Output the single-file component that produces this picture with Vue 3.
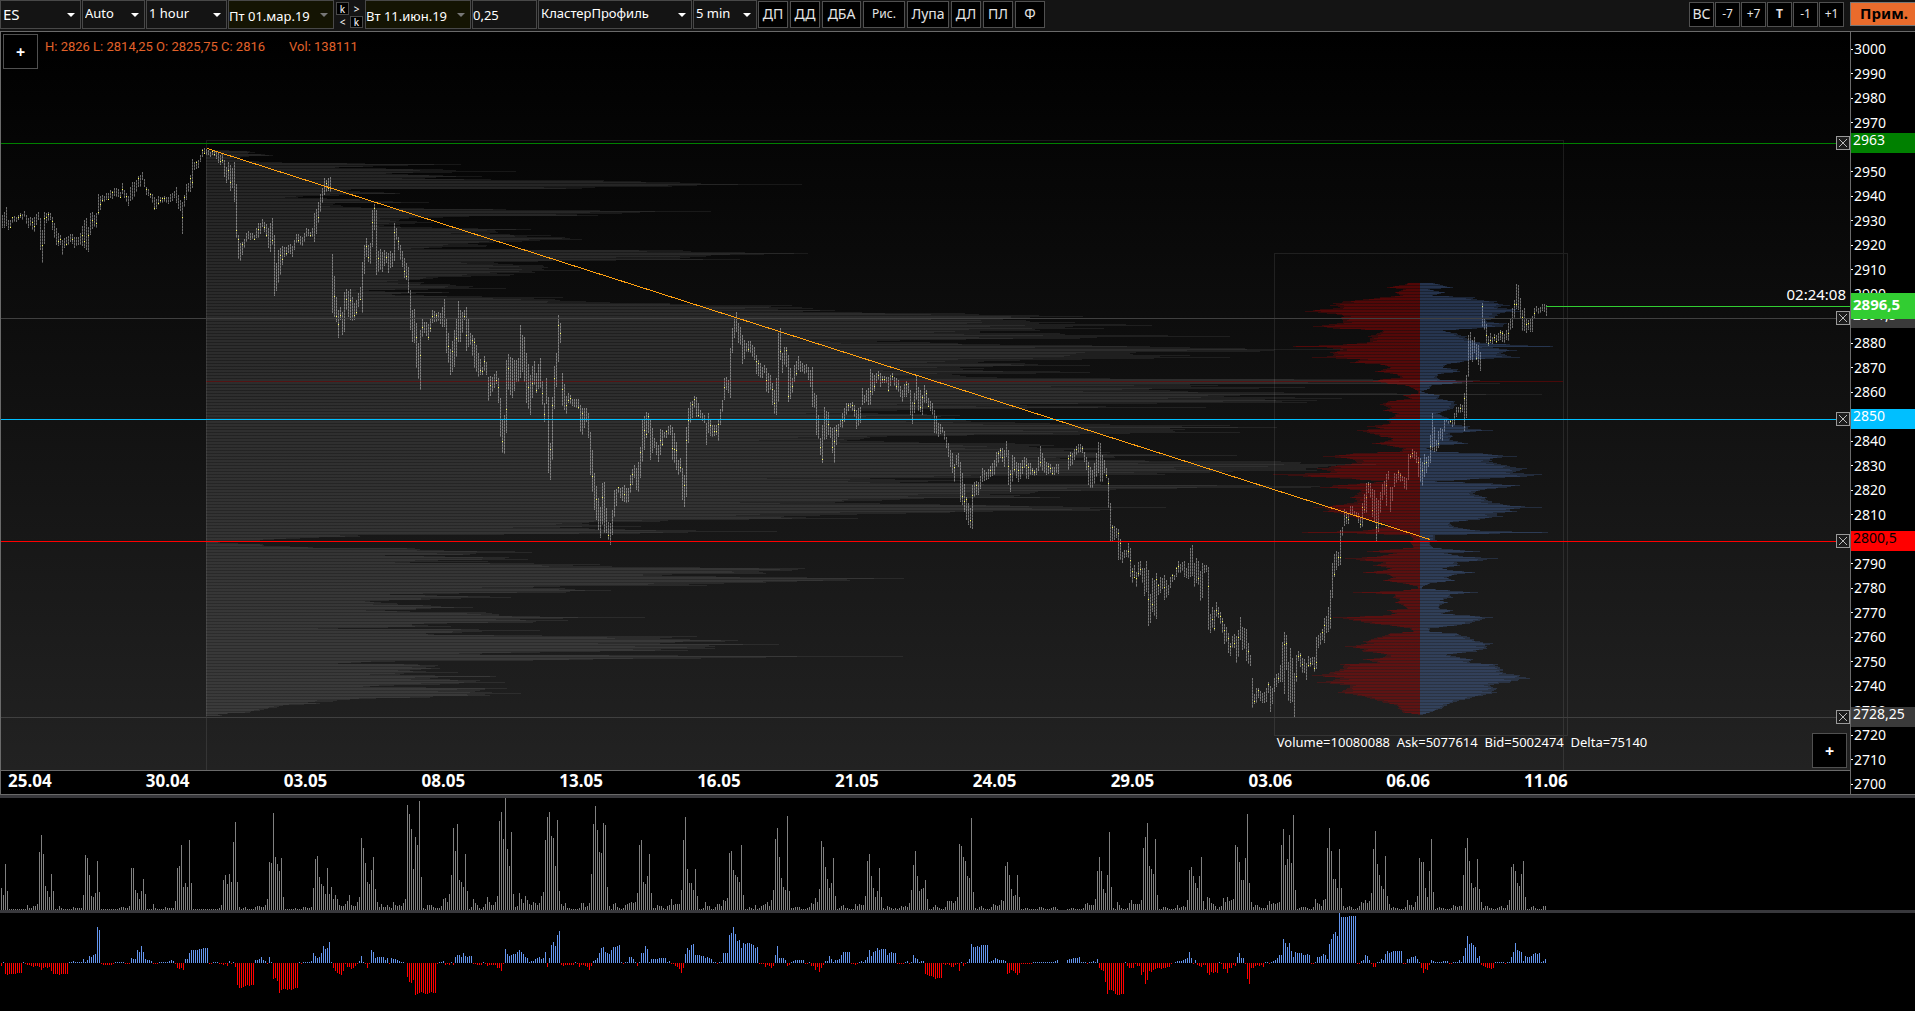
<script setup>
import { ref } from 'vue'

const symbol = ref('ES')
const scale = ref('Auto')
const period = ref('1 hour')
const dateFrom = ref('Пт 01.мар.19')
const dateTo = ref('Вт 11.июн.19')
const tick = ref('0,25')
const view = ref('КластерПрофиль')
const step = ref('5 min')

const tools = [
  { t: 'ДП', w: 30 }, { t: 'ДД', w: 30 }, { t: 'ДБА', w: 39 }, { t: 'Рис.', w: 42, small: true },
  { t: 'Лупа', w: 42 }, { t: 'ДЛ', w: 30 }, { t: 'ПЛ', w: 30 }, { t: 'Ф', w: 30 }
]
const shifts = [
  { t: 'ВС' }, { t: '-7', small: true }, { t: '+7', small: true },
  { t: 'Т', small: true, bold: true }, { t: '-1', small: true }, { t: '+1', small: true }
]

/* Round prices that sit wholly under a level tag get no scale label */
const covered = [2960, 2890, 2850, 2800]
const prices = Array.from({ length: 31 }, (_, i) => 3000 - i * 10)
const dates = ['25.04', '30.04', '03.05', '08.05', '13.05', '16.05', '21.05', '24.05', '29.05', '03.06', '06.06', '11.06']

const TOP = 32
const PLOT_H = 738
const AXIS_H = 762
const levels = [
  { y: 143, label: '2963', line: '#008000', bg: '#008000', fg: '#fff' },
  { y: 318, label: '2891,5', line: '#404040', bg: '#3a3a3a', fg: '#fff' },
  { y: 419, label: '2850', line: '#00bfff', bg: '#00bfff', fg: '#fff' },
  { y: 541, label: '2800,5', line: '#ff0000', bg: '#ff0000', fg: '#000' },
  { y: 717, label: '2728,25', line: '#404040', bg: '#3a3a3a', fg: '#fff' }
]
const inPlot = y => ((y - TOP) / PLOT_H) * 100 + '%'
const onAxis = y => ((y - TOP) / AXIS_H) * 100 + '%'

function noise(n) {
  const s = Math.sin(n * 127.1 + 11.7) * 43758.5453
  return s - Math.floor(s)
}
const parse = s => s.trim().split(/\s+/).map(p => p.split(',').map(Number))

/* Price bars: each block has its own origin and scale, points are x,high,low */
const priceBlocks = [
  { x: 0, y: 120, k: 2.45, pts: `5,285,325 15,262,318 20,300,330 30,290,308 45,286,300 60,272,292 70,295,325 75,290,318 84,290,335 94,277,300 99,295,390 104,330,430 109,277,372 115,280,310 124,278,300 129,290,330 135,325,375 145,345,375 150,360,405 157,355,385 172,342,365 182,352,385 192,350,375 197,340,375 207,300,385 212,295,390 217,320,395 222,280,345 232,285,320 237,280,325 241,222,285 250,225,245 265,218,240 285,205,230 295,215,235 300,190,222 305,210,235 315,228,258 324,185,240 334,180,215 345,165,200 350,157,180 359,200,225 369,220,235 379,232,270 390,232,250 405,232,250 415,222,245 427,212,235 432,200,250 437,225,268 442,240,272 447,245,343 452,225,262 457,192,240 462,190,215 466,165,215 471,117,205 476,125,150 486,120,145 491,105,125 496,88,110 501,84,102 510,90,105 525,92,108 535,100,128 545,100,130 550,120,170 555,140,190 560,125,180 565,135,212 570,145,205 574,125,245 579,192,355 584,345,418 589,370,422 599,358,385 604,338,365 614,338,360 624,345,360 634,308,355 643,298,320 653,312,350 658,325,385 662,310,395 667,295,375 672,345,527 677,430,512 682,390,490 687,385,465 697,380,410 707,375,400 717,378,412 727,343,370 740,350,378 751,325,350 760,335,350 766,325,352 771,280,365 780,245,310 790,205,250 795,175,225 800,180,215 809,172,215 814,402,580 819,468,590 824,530,605 829,570,655 834,560,600 839,575,645 844,515,635 849,508,570 858,508,600 868,550,600 878,520,560 883,500,540 888,425,580 893,375,462 898,355,410 903,375,425 908,370,432 913,270,380 918,253,330 923,270,465 928,392,455 937,395,455 947,395,430 952,400,458 962,400,440 967,310,422 972,325,360 977,350,390 987,392,440 992,415,475 997,428,480 1001,440,520 1006,510,630 1011,570,665 1015,568,670 1020,608,745 1025,670,777 1030,630,810 1035,597,650 1040,605,640 1049,612,660 1059,570,608 1069,578,605 1079,580,612 1089,537,620 1094,598,700 1103,688,765 1113,630,740 1118,595,710 1123,543,665 1128,570,665 1138,570,600 1143,560,692 1152,640,675 1162,655,745 1172,700,772 1182,740,765 1187,708,752 1192,725,765 1197,770,842 1206,770,815 1216,752,792 1221,775,850 1226,835,950 1231,900,1000 1236,885,1003 1241,720,940 1246,702,810 1255,715,835 1265,720,785 1270,715,785 1275,615,775 1280,645,755 1285,652,785 1290,700,850 1299,765,885 1309,722,795 1314,760,820 1324,715,805 1334,850,905 1339,775,852 1344,830,1058 1348,970,1080 1353,830,1020 1358,738,868 1363,700,800 1368,585,725 1373,610,670 1378,760,858 1388,828,882 1393,820,850 1403,838,858 1417,838,868 1422,855,935 1427,865,945 1437,865,905 1442,880,955 1447,935,1065 1452,990,1115 1457,1060,1170 1466,1135,1230 1471,1160,1255 1476,1088,1215 1481,1085,1240 1486,1165,1240 1491,1205,1260 1496,1210,1275 1500,1170,1245 1506,1110,1190 1515,1100,1120 1530,1095,1145 1540,1105,1145 1545,1065,1120 1555,1035,1075 1560,1045,1110 1565,1025,1115` },
  { x: 640, y: 160, k: 2.45, pts: `0,860,955 5,780,905 15,755,835 20,758,820 26,780,900 36,835,865 46,855,905 51,808,885 60,815,835 74,795,825 80,800,900 89,845,930 95,900,945 99,895,935 104,925,1020 109,945,1040 114,800,1010 119,745,850 124,725,790 134,708,745 138,710,770 148,750,775 158,765,790 163,790,855 168,760,820 178,795,830 188,795,825 193,780,842 202,720,755 207,655,720 212,650,690 217,660,700 221,565,715 226,505,580 231,475,535 236,457,515 241,490,550 246,500,555 251,525,612 261,550,575 271,543,580 281,560,600 286,585,642 300,620,655 305,615,640 310,625,695 320,645,690 325,670,735 330,690,762 334,655,765 339,520,725 344,505,600 349,580,640 354,560,615 359,562,620 364,585,725 374,655,700 379,615,665 389,588,630 398,610,635 408,612,640 418,630,680 422,620,740 427,700,745 432,705,825 437,765,838 442,835,885 447,795,908 452,740,840 462,755,825 467,800,835 472,805,880 477,800,910 482,795,855 491,780,800 496,760,805 506,730,765 516,730,745 526,735,770 531,750,808 540,740,790 545,685,735 550,705,730 559,685,735 564,628,735 570,640,705 580,640,670 584,633,660 589,640,680 594,648,670 604,650,670 609,650,695 619,638,660 629,655,690 643,690,725 653,662,710 658,670,700 663,690,765 667,725,792 672,700,760 677,648,720 682,680,752 692,705,765 697,675,730 707,715,740 717,730,765 722,750,820 731,790,830 741,800,820 751,830,865 756,850,890 766,880,940 771,912,965 776,885,915 780,878,920 785,905,1025 790,940,1035 800,1010,1080 810,1045,1105 814,975,1108 820,965,1010 830,965,1005 839,925,965 850,935,960 865,900,945 870,875,920 880,865,895 888,865,905 893,870,920 898,842,890 903,870,975 908,930,995 912,885,965 917,892,935 927,910,965 942,892,925 947,895,958 962,925,945 972,925,945 981,858,920 991,895,940 1005,912,940 1015,920,945 1025,912,942 1050,885,930 1060,880,915 1069,858,885 1084,858,880 1094,890,930 1099,905,975 1109,930,985 1118,880,950 1123,845,940 1128,850,965 1133,885,965 1138,900,940 1143,925,955 1148,955,1045 1152,1030,1142 1157,1095,1145 1167,1103,1135 1172,1108,1200 1182,1175,1208 1192,1170,1190 1197,1150,1195` },
  { x: 1110, y: 500, k: 3, pts: `61,143,232 67,205,250 73,195,235 79,215,262 85,187,232 91,183,225 97,205,248 103,205,287 109,182,275 115,210,377 121,282,370 127,235,335 133,240,347 139,220,358 145,252,285 152,230,280 158,235,268 164,225,300 170,240,295 176,255,285 182,232,265 194,225,240 200,202,232 206,182,218 212,193,220 218,185,212 224,183,230 230,205,235 236,190,238 241,145,230 247,135,228 253,190,260 259,175,250 265,183,255 271,213,302 277,190,293 283,195,218 289,195,215 295,200,390 301,343,398 307,322,385 313,330,393 319,305,350 325,322,355 331,337,373 337,355,398 343,372,433 349,380,425 355,400,460 361,430,468 367,408,445 373,402,445 379,408,490 385,390,470 391,350,420 397,380,450 403,383,447 409,388,482 415,430,493 421,465,497 427,535,625 433,582,612 439,565,610 445,563,595 451,573,602 463,575,608 469,565,605 475,547,580 481,557,635 487,563,612 493,535,575 499,523,560 505,518,550 511,495,545 517,425,545 523,395,583 529,405,510 535,487,602 541,445,608 547,475,605 553,520,653 559,465,547 565,453,483 571,460,500 577,475,518 583,477,520 589,490,540 595,468,500 607,470,495 613,470,515 619,412,508 625,405,445 631,400,435 637,387,420 643,355,430 649,348,398 655,320,395 661,270,388 667,190,295 673,163,230 679,153,210 685,155,197 691,90,195 697,82,107` },
  { x: 1240, y: 240, k: 3, pts: `313,808,858 321,820,853 327,805,835 331,798,825 337,797,822 343,812,825 350,817,830 355,820,850 361,830,865 367,790,860 373,762,820 379,728,818 385,727,760 391,728,775 397,748,830 403,750,850 409,773,902 415,780,875 421,757,820 427,733,780 433,722,765 439,703,798 445,692,720 451,742,815 457,740,782 463,700,740 469,703,730 475,690,720 481,700,725 487,708,722 493,710,748 499,715,750 505,643,720 511,643,658 517,628,655 523,633,658 529,635,670 535,650,710 541,655,725 547,665,737 553,642,710 559,650,700 565,648,682 571,585,670 577,520,630 583,560,635 589,600,632 595,573,625 601,563,598 607,568,602 613,540,575 619,538,545 631,540,548 637,538,562 643,518,555 649,502,530 655,500,520 661,492,520 667,495,515 673,460,572 679,405,533 685,285,412 691,275,360 697,300,365 703,292,340 709,312,360 715,315,375 721,337,392 727,190,262 733,233,270 739,253,308 745,288,318 751,278,308 757,290,312 763,282,302 775,278,302 787,272,305 793,282,308 799,270,300 805,250,302 811,235,270 817,205,265 823,180,235 829,133,207 835,135,210 841,175,235 847,210,272 853,205,273 859,238,278 865,240,270 877,228,275 883,205,238 889,198,215 901,200,220 913,192,215 919,195,227` }
]

const bars = new Map()
for (const b of priceBlocks) {
  const pts = parse(b.pts).map(([x, h, l]) => [Math.round((b.x + x / b.k - 2) / 2), b.y + h / 3, b.y + l / 3])
  pts.forEach((p, i) => {
    bars.set(p[0], [p[1], p[2]])
    const q = pts[i + 1]
    if (!q || q[0] - p[0] > 4) return
    for (let n = p[0] + 1; n < q[0]; n++) {
      const t = (n - p[0]) / (q[0] - p[0])
      const j = (noise(n) - 0.5) * 4
      bars.set(n, [p[1] + (q[1] - p[1]) * t + j, p[2] + (q[2] - p[2]) * t + j])
    }
  })
}
let barPath = ''
let dotPath = ''
for (const [n, [h, l]] of bars) {
  const x = n * 2 + 2.5
  barPath += `M${x} ${Math.round(h)}V${Math.round(l)}`
  if (noise(n + 0.3) < 0.42) {
    const y = Math.round(h + (l - h) * (0.1 + 0.8 * noise(n + 0.7)))
    dotPath += `M${x} ${y}v1`
  }
}

/* Volume profile of the whole range: y,right edge */
const rangePts = parse(`150,229 151,250 155,273 157,241 160,245 162,282 164,461 167,339 169,443 171,516 173,392 174,408 176,482 178,425 180,604 182,680 184,802 186,672 188,582 189,351 193,400 195,339 197,298 199,363 202,429 203,335 207,361 209,506 210,600 211,711 212,640 215,598 216,469 219,400 222,433 225,384 229,531 233,490 235,551 239,582 242,494 246,486 248,424 250,683 253,808 257,690 259,740 260,616 262,494 265,543 270,580 272,535 275,510 278,433 280,408 286,473 288,506 290,369 292,449 294,392 297,563 299,555 302,610 303,670 305,792 308,813 312,862 313,965 316,1083 318,1050 322,1075 325,1152 327,1065 328,1104 332,980 333,1060 336,1230 338,1080 340,900 342,930 346,1150 347,1190 349,1343 351,1260 353,1130 355,1190 357,1230 360,1020 363,1025 365,1090 367,960 371,1060 372,1090 375,960 378,1110 379,1373 380,1480 383,1500 384,1190 387,1305 390,1170 393,1397 394,1542 395,1240 398,1342 402,1307 404,1020 407,1206 409,920 412,860 415,960 423,1050 425,1230 427,1277 428,1170 432,1240 434,1080 437,870 439,860 443,1015 444,1040 448,1100 452,1110 455,1237 458,1060 461,1281 464,1376 467,1318 470,1317 472,1210 474,1165 477,980 478,870 480,960 482,900 483,960 485,1270 486,1320 487,1311 490,1110 493,1030 497,1060 499,900 503,880 504,940 507,1166 510,1100 512,950 515,820 518,858 520,668 521,660 523,582 526,641 527,560 530,696 531,777 533,640 534,504 535,358 536,360 538,300 540,260 542,220 544,263 546,290 547,313 548,415 550,444 551,515 552,532 554,470 555,385 557,509 559,528 560,438 561,488 562,410 563,534 564,600 566,612 567,700 568,805 570,792 572,763 573,766 575,662 577,807 578,904 580,850 582,766 585,707 586,560 588,565 590,611 592,566 594,390 596,490 597,511 599,430 601,370 603,397 605,431 607,473 609,416 610,385 612,486 614,499 616,540 617,645 619,520 620,568 622,533 624,412 626,451 628,338 629,479 630,540 632,462 634,434 635,542 636,697 638,660 640,738 641,725 643,660 644,779 646,715 648,715 650,688 652,540 654,480 655,678 656,903 658,701 660,533 661,395 663,338 664,418 665,438 668,440 670,410 672,458 674,400 676,496 678,430 680,480 682,505 684,440 686,370 688,507 690,480 692,492 693,521 695,490 697,430 699,350 701,333 703,320 704,304 707,277 709,264 710,260 712,250 714,218 715,222`)

function rows(pts, col) {
  const out = []
  pts.forEach((p, i) => {
    const q = pts[i + 1]
    out.push([p[0], p[col]])
    if (!q) return
    for (let y = p[0] + 1; y < q[0]; y++) {
      const t = (y - p[0]) / (q[0] - p[0])
      out.push([y, (p[col] + (q[col] - p[col]) * t) * (1 - 0.06 * noise(y * 1.3 + col))])
    }
  })
  return out
}
function layers(list, x0, dir) {
  let full = ''
  let core = ''
  for (const [y, w] of list) {
    full += `M${x0} ${y + 0.5}h${Math.round(w * dir)}`
    if (y % 3) core += `M${x0} ${y + 0.5}h${Math.round(w * dir * (0.84 + 0.14 * noise(y)))}`
  }
  return { full, core }
}
const rangeProfile = layers(rows(rangePts, 1).map(([y, x]) => [y, Math.max(6, x - 206)]), 206, 1)

/* Ask / bid profile: row, bid width, ask width */
const flowPts = parse(`128,40,45 133,45,60 142,100,98 148,50,30 157,75,75 164,60,40 170,120,165 178,170,170 184,230,230 190,260,235 196,270,270 202,240,235 208,300,290 214,345,300 220,280,240 226,230,235 235,255,225 243,230,200 250,250,260 257,320,250 265,260,170 270,110,70 280,130,110 287,155,140 295,150,140 305,160,180 312,230,270 317,380,400 322,280,220 330,240,290 337,270,250 345,260,260 351,325,300 358,180,170 365,210,120 373,120,80 380,90,70 387,110,115 394,135,120 402,70,55 410,60,50 418,120,60 422,140,160 428,100,100 435,45,35 445,20,30 453,5,5 458,5,25 466,50,60 474,30,55 484,95,105 493,120,110 503,90,100 511,110,80 520,70,55 530,85,80 538,110,100 548,90,90 557,160,150 563,120,145 570,190,220 580,150,90 587,120,100 593,80,90 600,95,100 608,145,145 615,100,60 625,50,20 632,60,50 638,200,190 647,290,290 655,220,220 665,190,220 675,250,260 683,310,320 690,280,300 695,270,280 703,440,365 708,350,320 715,240,210 723,110,50 728,180,220 735,260,300 742,300,260 750,180,180 760,190,160 770,210,200 780,190,205 788,220,240 795,260,270 800,320,365 806,280,270 813,290,290 820,240,230 828,220,250 837,180,180 845,120,90 855,90,95 863,130,130 870,170,180 875,355,385 880,190,240 886,30,45 893,20,45 900,20,50 906,30,30 913,25,30 920,20,40 926,90,100 932,160,180 940,80,85 947,130,130 953,225,235 960,180,190 966,110,110 975,140,120 983,90,70 990,110,100 996,170,165 1003,100,110 1010,80,80 1020,110,105 1028,50,30 1037,8,10 1045,5,5 1050,50,90 1056,200,175 1063,75,90 1072,80,100 1080,60,60 1087,75,85 1095,50,60 1103,40,60 1110,100,100 1118,75,70 1125,110,150 1132,260,220 1140,200,180 1148,150,150 1155,90,110 1163,30,30 1172,20,30 1180,90,110 1190,130,150 1202,170,180 1210,160,220 1217,225,200 1225,180,200 1233,170,170 1242,100,80 1250,110,120 1257,170,160 1265,130,150 1272,240,235 1280,230,240 1288,240,250 1297,270,250 1306,325,300 1315,240,330 1325,310,270 1335,210,210 1345,220,230 1355,245,230 1365,190,190 1375,150,150 1385,110,100 1395,70,80 1405,65,65 1415,50,30 1423,5,10`)
  .map(([y, l, r]) => [240 + Math.round(y / 3), l / 3, r / 3])
const bidProfile = layers(rows(flowPts, 1), 1420, -1)
const askProfile = layers(rows(flowPts, 2), 1420, 1)

/* Histograms: "first index:values", one bar per hour */
const zero3 = n => Array(n).fill(3).join(',')
const volumeRuns = [
  `0:66,45,138,57,${zero3(9)},15,6,6,12,12,18,174,225,168,72,57,39,108,57,3,3,12,6,3,3,3,3,3,9,6,6,6,6`,
  '41:45,165,156,105,42,39,51,147,54', `50:${zero3(9)},6,9,9,6,6,12,126,126,60,51,33,57,93,48,3,3,3,18,6,3,3,3,3,9,6,6,6,6,27`,
  `88:126,132,195,69,81,69,210,81,${zero3(13)},6,15,90,105,78,108,84,204,264,84,9,3,6,9,3,3,3,3,9,12,12,9,9,15,33`,
  '134:144,141,291,159,138,117,156,39,3,3,3,3,3,6,3,3,3,9,9,6,6,9,66,153,162,99,78,72,48,126,48,69,33,45,33,15,12,12,18,27,45,15,12,12,24,39',
  '180:216,186,141,84,78,120,159,63,24,9,18,9,9,15,9,6,24,15,12,15,12,21,33,315,288,243,123,219,195,327,99,6,3,15,15,15,9,6,6,6,12,33,36,24,48',
  '225:105,246,177,258,90,84,69,168,57,3,9,33,21,15,6,3,9,18,39,24,15,15,24,42,267,294,213,336,183,132,234,48,9,12,51,33,21,42,30,18,15,24,21,15,21,42,54',
  '272:210,279,294,222,216,132,270,57,18,12,21,6,6,3,3,3,3,6,21,21,9,12,21,108,258,312,240,174,171,261,255,69,12,3,18,21,9,6,3,6,15,18,21,24,21,24,51,195,210',
  '320:156,84,78,102,168,51,6,6,15,12,12,6,3,12,15,33,15,18,18,18,60,210,279,123,81,81,60,123,42,3,3,6,24,12,12,3,3,9,18,18,12,30,27,36',
  '364:171,177,120,105,99,84,195,45,3,3,9,6,3,15,3,6,12,15,18,24,12,30,60,213,246,159,96,69,60,282,57,6,6,9,9,9,3,3,3,6,9,21,18,36,24,63',
  '410:207,189,129,93,66,81,156,42,3,6,12,15,6,6,3,3,3,18,12,18,15,15,42,147,168,102,66,39,57,126,39,6,3,12,9,6,3,6,3,6,12,9,12,9,21,60,135,177,102,57,63,66,90,33,3,3,9,15,9,6,3,3,9,27',
  '474:27,27,21,27,39,198,192,159,147,102,96,276,54,6,3,9,12,6,3,3,3,9,18,15,12,15,30,27,132,144,105,63,42,45,105,39,3,3,6,6,3,3,3,3,3,9,9,6,3,3,3,6,9,9,3',
  '533:3,3,6,6,3,3,3,3,6,18,21,15,15,15,33,117,159,117,63,51,105,234,69,6,3,24,15,6,3,3,6,21,30,18,18,18,18,30,186,219,261,132,123,108,213,45,3,3,9,9,6,3,3,3,6,15,6,9,12,9,30,120,129,102,81,66,102',
  '600:159,27,3,39,36,21,18,12,3,9,12,36,24,39,27,30,33,195,189,144,90,90,156,288,81,24,9,15,15,9,6,6,6,15,27,18,21,18,21,24,195,243,135,153,225,141,285,60,3,6,9,9,9,6,3,3,9,33,21,18,12,30,33',
  '663:186,246,177,93,93,66,183,66,12,6,9,12,9,3,3,6,12,24,21,30,21,27,51,183,237,138,105,72,63,162,42,18,6,9,6,6,3,3,3,9,30,15,15,9,24,42,156,144,144,66,39,117,213,54,3,6,9,6,6,3,3,3,6,15',
  '727:12,9,12,12,105,186,216,147,81,66,69,153,63,24,6,12,12,6,6,3,3,6,9,12,6,6,15,30,129,138,117,81,72,108,147,39,3,3,9,12,6,3,3,3,12,12'
]
const deltaRuns = [
  '0:-9,3,-33,-36,-33,-33,-33,-33,-30,-30,-30,3,-3,-6,-6,-9,-12,-9,-9,-12,-21,-15,-12,-15,-12,-24,-33,-33,-33,-36,-33,-33,-33,-33',
  '34:3,3,6,3,3,3,3,12,3,9,21,18,24,27,108,99,-3,-6,-6,-6,-6,-6,-3,3,3,3,3,3,-3,-3,-3,15,12,12,39,33,51,33,12,9,9,6,-3,-3,-3,3,3,3,3,3,6,9,6,-3',
  '88:-15,-18,-15,-21,12,12,30,39,39,39,39,42,42,45,45,45,-3,-3,3,3,3,-3,-3,-6,-3,-9,6,-3,3,-12,-66,-75,-75,-72,-69,-66,-69,-66,-66',
  '127:9,9,12,18,9,6,-3,18,3,-48,-45,-54,-90,-81,-78,-78,-81,-78,-81,-78,-75,-75,3,-3,3,3,3,3,6,30,21,15,18,30,51,42,45,63,3',
  '166:-15,-24,-30,-33,-36,-24,-3,-12,-12,-18,-15,-9,-3,6,21,3,-3,-15,-3,39,33,15,18,18,18,18,9,15,-3,15,12,12,9,6,3,3',
  '203:-42,-57,-60,-51,-96,-93,-90,-87,-90,-93,-93,-90,-87,-90,-90,-3,3,3,6,-6,-3,-6,3,-6,18,24,24,18,30,21,18,21,21,-3,-3,-6,-6,-6,3,-3,-9,-6,-6,-6,-6,-15,-15,-24,-3',
  '252:42,27,21,24,27,27,33,39,33,27,18,15,3,6,6,12,15,18,12,15,33,-12,15,54,63,51,84,96,-6,-9,-6,-6,-6,-6,-6,3,-3,-12,-6,-6,-9,-12,-21,-9,6,9,15,30,45,48,33,30,27,39,48,48,51,54',
  '310:3,-3,3,3,18,18,12,3,-9,3,30,30,51,42,3,12,12,12,12,15,15,15,15,3,6,-3,-3,-9,-12,-18,-30,-15,27,45,39,54,57,24,24,24,21,21,15,18,15,12,3,3,-3,3,3',
  '361:30,30,30,84,90,108,87,66,69,45,60,57,60,60,57,54,45,48,-3,-3,-3,-12,-6,-9,-15,-9,24,51,15,15,15,9,-9,-6,3,6,9,9,9,9,9,-3,-3,3,-9,-9,-21,-12,-27,-15,-6',
  '412:6,6,21,12,3,9,9,12,24,33,33,33,33,-3,-3,-6,-3,3,6,3,9,18,39,21,33,36,45,39,42,42,42,24,30,33,30,30,-3,-3,-3,-3,3,6,-3,3,24,15,12,3,6,6',
  '462:-33,-36,-39,-39,-42,-48,-45,-45,-45,-3,-6,-3,-6,-12,-12,-6,-3,-24,3,-9,-3,3,12,57,48,48,51,48,54,54,54,54,3,6,9,15,12,9,9,9,6,-33,-30,-21,-24,-30,-36,-30,-3,-3,-3,-3,-3,-3,3,3,3,3,3,3,3,3,3,3,3,6,9',
  '533:9,12,12,15,15,15,18,3,3,3,-3,3,3,6,3,12,-15,-21,-24,-57,-93,-81,-81,-84,-93,-96,-96,-93,-93,3,-9,-15,-15,-15,-3,-9,-9,-36,-27,-63,-51,-24,-27,-21,-18,-15,-15,-18,-15,-15,-12,-12,-3',
  '587:3,6,6,6,9,12,15,33,15,-3,9,-6,-9,-12,-6,-6,-30,-36,-27,-30,-27,-30,3,-3,-18,-18,-30,-15,-15,-6,-9,18,30,15,15,-3,-48,-63,-15,-15,-9,-6,-9,-6,-12',
  '632:3,3,-3,3,6,9,15,24,24,72,60,48,60,36,18,33,30,30,30,24,24,27,24,-3,-3,3,18,18,21,27,24,12,57,72,87,93,81,150,138,138,138,138,141,141,141,141',
  '678:-3,-3,6,9,24,21,9,-3,-12,-12,3,3,12,9,27,36,30,33,36,36,36,36,36,-3,-3,12,12,18,18,21,12,3,-15,-30,-18,-21,-6,9,6,3,3,3,3,6,6,6,-3,-3,3,3,3,9,3,21',
  '732:45,81,57,60,54,48,15,21,-6,-9,-12,-15,-15,-18,-15,3,3,3,3,3,-3,3,3,18,33,60,39,36,33,6,21,18,18,21,27,30,27,30,3,6,12'
]
function histogram(runs, base, pick) {
  let d = ''
  for (const run of runs) {
    const [start, vals] = run.split(':')
    vals.split(',').map(Number).forEach((v, i) => {
      if (v && pick(v)) d += `M${(+start + i) * 2 + 1} ${base}v${-v}h1v${v}z`
    })
  }
  return d
}
const volumePath = histogram(volumeRuns, 336, () => true)
const upPath = histogram(deltaRuns, 150, v => v > 0)
const downPath = histogram(deltaRuns, 150, v => v < 0)
</script>

<template>
  <div class="terminal">
    <header class="toolbar">
      <label class="pick w-symbol"><select v-model="symbol" aria-label="Инструмент"><option>ES</option></select></label>
      <label class="pick small w-scale"><select v-model="scale" aria-label="Масштаб"><option>Auto</option></select></label>
      <label class="pick small w-period"><select v-model="period" aria-label="Период"><option>1 hour</option></select></label>
      <label class="pick date w-from"><select v-model="dateFrom" aria-label="Дата начала"><option>Пт 01.мар.19</option></select></label>
      <div class="nudge">
        <button class="key">k</button><button>&gt;</button>
        <button>&lt;</button><button class="key">k</button>
      </div>
      <label class="pick date w-to"><select v-model="dateTo" aria-label="Дата конца"><option>Вт 11.июн.19</option></select></label>
      <input v-model="tick" class="tick" type="text" aria-label="Шаг цены" />
      <label class="pick small w-view"><select v-model="view" aria-label="Вид"><option>КластерПрофиль</option></select></label>
      <label class="pick small w-step"><select v-model="step" aria-label="Интервал"><option>5 min</option></select></label>
      <div class="tools">
        <button v-for="b in tools" :key="b.t" class="btn" :class="{ little: b.small }" :style="{ width: b.w + 'px' }">{{ b.t }}</button>
      </div>
      <div class="shifts">
        <button v-for="b in shifts" :key="b.t" class="btn" :class="{ little: b.small, strong: b.bold }">{{ b.t }}</button>
      </div>
      <button class="apply">Прим.</button>
    </header>

    <main class="chart">
      <div class="left">
        <section class="plot">
          <svg class="fill" viewBox="1 32 1849 738" preserveAspectRatio="none" shape-rendering="crispEdges" fill="none">
            <path :d="barPath" stroke="#fff" stroke-opacity=".24" />
            <path :d="barPath" stroke="#fff" stroke-opacity=".22" stroke-dasharray="2 1" />
            <path :d="dotPath" stroke="#ffff55" />
            <path :d="rangeProfile.full" stroke="#fff" stroke-opacity=".07" />
            <path :d="rangeProfile.core" stroke="#fff" stroke-opacity=".06" />
            <path d="M206 381.5H1563" stroke="#a00000" stroke-opacity=".4" />
            <path :d="bidProfile.full" stroke="#d00000" stroke-opacity=".2" />
            <path :d="bidProfile.core" stroke="#d00000" stroke-opacity=".2" />
            <path :d="askProfile.full" stroke="#6495ed" stroke-opacity=".18" />
            <path :d="askProfile.core" stroke="#6495ed" stroke-opacity=".14" />
            <path d="M206.5 770V140.5H1563.5V770M1274.5 253.5H1567.5V735.5H1274.5Z" stroke="#fff" stroke-opacity=".09" />
            <path v-for="l in levels" :key="l.y" :d="`M0 ${l.y + 0.5}H1850`" :stroke="l.line" />
            <path d="M1546 306.5H1850" stroke="#32cd32" />
            <path d="M207 148.5L1430 539.5" stroke="#ffa010" />
          </svg>
          <button class="add first" aria-label="Добавить панель">+</button>
          <p class="ohlc"><span>H: 2826 L: 2814,25 O: 2825,75 C: 2816</span><span>Vol: 138111</span></p>
          <time class="countdown">02:24:08</time>
          <p class="totals">Volume=10080088&nbsp; Ask=5077614&nbsp; Bid=5002474&nbsp; Delta=75140</p>
          <button v-for="l in levels" :key="l.label" class="close" :style="{ top: inPlot(l.y) }" aria-label="Удалить уровень">
            <svg viewBox="0 0 12 12"><path d="M2 2L10 10M10 2L2 10" stroke="#bbb" fill="none" /></svg>
          </button>
          <button class="add last" aria-label="Добавить индикатор">+</button>
        </section>
        <ol class="dates"><li v-for="d in dates" :key="d">{{ d }}</li></ol>
      </div>
      <aside class="axis">
        <ol class="prices"><li v-for="p in prices" :key="p"><template v-if="!covered.includes(p)">{{ p }}</template></li></ol>
        <span v-for="l in levels" :key="l.label" class="tag" :style="{ top: onAxis(l.y), background: l.bg, color: l.fg }">{{ l.label }}</span>
        <strong class="tag now" :style="{ top: onAxis(306) }">2896,5</strong>
      </aside>
    </main>

    <section class="volume">
      <svg class="fill" viewBox="0 0 1915 336" preserveAspectRatio="none" shape-rendering="crispEdges"><path :d="volumePath" fill="#808080" /></svg>
    </section>
    <section class="delta">
      <svg class="fill" viewBox="0 0 1915 294" preserveAspectRatio="none" shape-rendering="crispEdges">
        <path :d="upPath" fill="#6495ed" />
        <path :d="downPath" fill="#ff0000" />
      </svg>
    </section>
  </div>
</template>

<style>
body { margin: 0; background: #000; }
</style>

<style scoped>
* { box-sizing: border-box; }
.terminal {
  display: flex;
  flex-direction: column;
  min-height: 100vh;
  background: #000;
  color: #fff;
  font-family: "Noto Sans", "Open Sans", sans-serif;
  font-size: 14px;
}
button, select, input { font-family: inherit; color: inherit; margin: 0; padding: 0; border-radius: 0; }
ol, p { margin: 0; padding: 0; list-style: none; }

.toolbar {
  display: flex;
  flex: none;
  gap: 1px;
  height: 32px;
  background: #141414;
  border-bottom: 1px solid #6a6a6a;
}
.pick { position: relative; height: 29px; border: 1px solid #484848; background: #141414; }
.pick::after {
  content: "";
  position: absolute;
  right: 5px;
  top: 12px;
  width: 8px;
  height: 4px;
  background: #fff;
  clip-path: polygon(0 0, 100% 0, 50% 100%);
  pointer-events: none;
}
.pick select {
  display: block;
  appearance: none;
  width: 100%;
  height: 26px;
  padding-left: 2px;
  border: 0;
  background: transparent;
  font-size: 15px;
}
.pick.small select { height: 23px; font-size: 13px; }
.pick.date { background: #141403; }
.pick.date select { height: 30px; padding-left: 0; font-size: 13px; }
.pick.date::after { background: #777; }
.w-symbol { width: 81px; }
.w-scale { width: 63px; }
.w-period { width: 81px; }
.w-from { width: 106px; }
.w-to { width: 106px; }
.w-view { width: 154px; }
.w-step { width: 64px; }
.nudge {
  display: grid;
  grid-template-columns: 13px 13px;
  grid-template-rows: 13px 12px;
  gap: 1px;
  width: 29px;
  padding: 2px 0 0 1px;
}
.nudge button { border: 0; background: transparent; font-size: 10px; line-height: 10px; }
.nudge .key { border: 1px solid #484848; background: #000; }
.tick {
  width: 65px;
  height: 29px;
  border: 1px solid #484848;
  background: #141414;
  font-size: 13px;
}
.tools { display: flex; gap: 2px; padding: 1px 0 0; }
.btn {
  height: 27px;
  padding-bottom: 2px;
  border: 1px solid #505050;
  background: #000;
  color: #e4e4e4;
  font-size: 14px;
  white-space: nowrap;
}
.btn.little { font-size: 12px; }
.btn.strong { font-weight: 700; }
.shifts { display: flex; gap: 1px; margin-left: auto; padding: 2px 5px 0 0; }
.shifts .btn { width: 25px; height: 25px; }
.apply {
  width: 65px;
  height: 24px;
  margin-top: 2px;
  padding: 0 0 2px 2px;
  border: 1px solid #777;
  border-right: 0;
  background: #e96b2c;
  color: #000;
  font-size: 15px;
  font-weight: 700;
}

.chart { display: flex; flex: 763 0 763px; border-bottom: 1px solid #6a6a6a; }
.left { display: flex; flex: 1; flex-direction: column; border-left: 1px solid #6a6a6a; }
.plot { position: relative; flex: 1; background: linear-gradient(#000, #222); }
.fill { position: absolute; inset: 0; display: block; width: 100%; height: 100%; }
.dates {
  display: flex;
  height: 24px;
  padding: 0 188px 0 7px;
  border-top: 1px solid #6a6a6a;
  background: #000;
  font-size: 17px;
  font-weight: 700;
  line-height: 20px;
}
.dates li { flex: 1; }

.add {
  position: absolute;
  width: 35px;
  height: 35px;
  border: 1px solid #505050;
  background: #000;
  font-size: 16px;
  font-weight: 700;
}
.add.first { left: 2px; top: 2px; }
.add.last { right: 3px; bottom: 2px; }
.ohlc {
  position: absolute;
  left: 44px;
  top: 6px;
  display: flex;
  gap: 24px;
  color: #e2622a;
  font-family: Roboto, "Noto Sans", sans-serif;
  font-size: 13px;
  line-height: 17px;
}
.countdown { position: absolute; right: 4px; top: 251px; font-size: 15px; line-height: 22px; }
.totals { position: absolute; left: 69%; top: 701px; font-size: 13px; line-height: 18px; white-space: nowrap; }
.close {
  position: absolute;
  right: 0;
  width: 14px;
  height: 14px;
  border: 1px solid #999;
  background: #1c1c1c;
  transform: translateY(-7px);
}
.close svg { display: block; width: 12px; height: 12px; }

.axis { position: relative; width: 65px; border-left: 1px solid #6a6a6a; background: #000; }
.prices {
  display: flex;
  flex-direction: column;
  justify-content: space-between;
  height: 100%;
  padding: 9px 0 2px;
}
.prices li { display: flex; align-items: center; gap: 1px; height: 16px; line-height: 16px; }
.prices li::before { content: ""; width: 2px; height: 1px; background: #fff; }
.tag {
  position: absolute;
  left: 0;
  right: 0;
  height: 20px;
  padding-left: 2px;
  line-height: 14px;
  transform: translateY(-10px);
}
.tag.now {
  height: 26px;
  background: #32cd32;
  font-size: 15px;
  font-weight: 700;
  line-height: 22px;
  transform: translateY(-13px);
}

.volume, .delta { position: relative; border-top: 3px solid #38383c; }
.volume { flex: 115 0 115px; }
.delta { flex: 101 0 101px; }
</style>
